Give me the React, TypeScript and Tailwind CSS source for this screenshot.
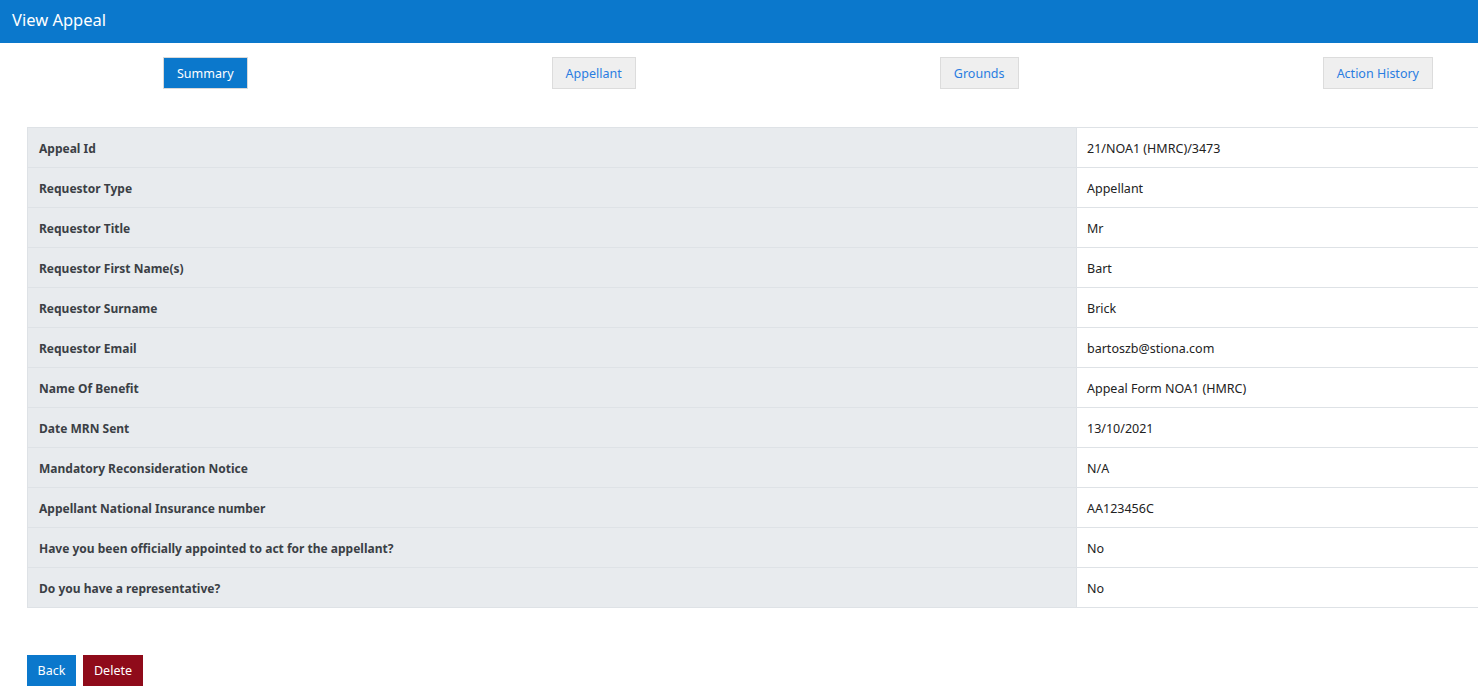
const rows: [string, string][] = [
  ['Appeal Id', '21/NOA1 (HMRC)/3473'],
  ['Requestor Type', 'Appellant'],
  ['Requestor Title', 'Mr'],
  ['Requestor First Name(s)', 'Bart'],
  ['Requestor Surname', 'Brick'],
  ['Requestor Email', 'bartoszb@stiona.com'],
  ['Name Of Benefit', 'Appeal Form NOA1 (HMRC)'],
  ['Date MRN Sent', '13/10/2021'],
  ['Mandatory Reconsideration Notice', 'N/A'],
  ['Appellant National Insurance number', 'AA123456C'],
  ['Have you been officially appointed to act for the appellant?', 'No'],
  ['Do you have a representative?', 'No'],
]

const tabs = ['Summary', 'Appellant', 'Grounds', 'Action History']

export default function App() {
  return (
    <div className="min-h-[697px] w-[1478px] overflow-hidden bg-white text-[12.5px] text-[#333]" style={{ fontFamily: '"Noto Sans", "Open Sans", sans-serif' }}>
      <div className="h-[43px] bg-[#0b78cc] px-3 flex items-center">
        <h1 className="text-[16.5px] text-white -mt-[2px]">View Appeal</h1>
      </div>

      <div className="mt-[14px] flex justify-between pl-[163px] pr-[45px]">
        {tabs.map((t, i) => (
          <button
            key={t}
            className={
              i === 0
                ? 'h-[32px] px-[13px] pt-[2px] bg-[#0b78cc] border border-[#d9d9d9] text-white text-[12.5px]'
                : 'h-[32px] px-[13px] pt-[2px] bg-[#efefef] border border-[#dcdcdc] text-[#2a7de1] text-[12.5px]'
            }
          >
            {t}
          </button>
        ))}
      </div>

      <div className="mt-[38px] ml-[27px] w-[1480px] border-t border-l border-[#dee2e6]">
        {rows.map(([label, value]) => (
          <div key={label} className="flex h-[40px] border-b border-[#dee2e6]">
            <div className="w-[1049px] shrink-0 bg-[#e8ebee] border-r border-[#dee2e6] px-[11px] pt-[2px] flex items-center font-bold text-[12px] text-[#3b3f45]">
              {label}
            </div>
            <div className="flex-1 px-[10px] pt-[4px] flex items-center text-[#222]">{value}</div>
          </div>
        ))}
      </div>

      <div className="mt-[47px] ml-[27px] flex gap-[7px]">
        <button className="h-[31px] w-[49px] pt-[1px] bg-[#0b78cc] text-white text-[12.5px]">Back</button>
        <button className="h-[31px] w-[60px] pt-[1px] bg-[#8f0b1a] text-white text-[12.5px]">Delete</button>
      </div>
    </div>
  )
}
